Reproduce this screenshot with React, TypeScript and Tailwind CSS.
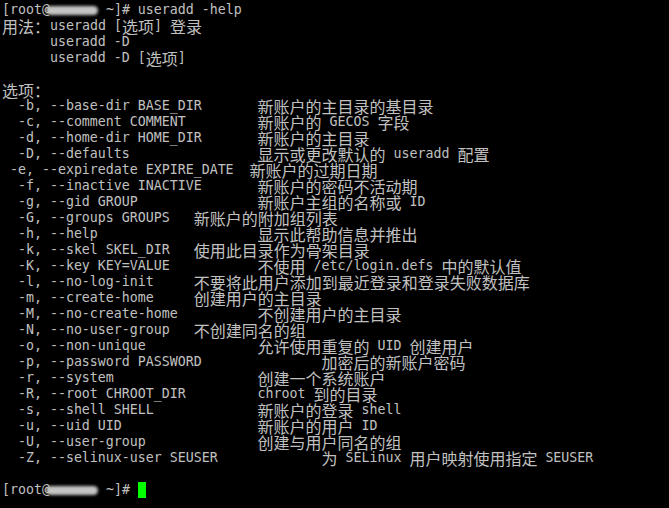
import React from 'react';

const HOST = '\u0000';

const options: [string, number, string][] = [
  ['  -b, --base-dir BASE_DIR', 32, '新账户的主目录的基目录'],
  ['  -c, --comment COMMENT', 32, '新账户的 GECOS 字段'],
  ['  -d, --home-dir HOME_DIR', 32, '新账户的主目录'],
  ['  -D, --defaults', 32, '显示或更改默认的 useradd 配置'],
  [' -e, --expiredate EXPIRE_DATE', 31, '新账户的过期日期'],
  ['  -f, --inactive INACTIVE', 32, '新账户的密码不活动期'],
  ['  -g, --gid GROUP', 32, '新账户主组的名称或 ID'],
  ['  -G, --groups GROUPS', 24, '新账户的附加组列表'],
  ['  -h, --help', 32, '显示此帮助信息并推出'],
  ['  -k, --skel SKEL_DIR', 24, '使用此目录作为骨架目录'],
  ['  -K, --key KEY=VALUE', 32, '不使用 /etc/login.defs 中的默认值'],
  ['  -l, --no-log-init', 24, '不要将此用户添加到最近登录和登录失败数据库'],
  ['  -m, --create-home', 24, '创建用户的主目录'],
  ['  -M, --no-create-home', 32, '不创建用户的主目录'],
  ['  -N, --no-user-group', 24, '不创建同名的组'],
  ['  -o, --non-unique', 32, '允许使用重复的 UID 创建用户'],
  ['  -p, --password PASSWORD', 40, '加密后的新账户密码'],
  ['  -r, --system', 32, '创建一个系统账户'],
  ['  -R, --root CHROOT_DIR', 32, 'chroot 到的目录'],
  ['  -s, --shell SHELL', 32, '新账户的登录 shell'],
  ['  -u, --uid UID', 32, '新账户的用户 ID'],
  ['  -U, --user-group', 32, '创建与用户同名的组'],
  ['  -Z, --selinux-user SEUSER', 40, '为 SELinux 用户映射使用指定 SEUSER'],
];

const lines: string[] = [
  `[root@${HOST} ~]# useradd -help`,
  '用法：useradd [选项] 登录',
  '      useradd -D',
  '      useradd -D [选项]',
  '',
  '选项：',
  ...options.map(([left, col, desc]) => left.padEnd(col) + desc),
  '',
  `[root@${HOST} ~]# `,
];

// hostname is smudged out in the capture
const Smudge = () => (
  <span className="inline-block w-[48px] h-4 align-top">
    <span className="block mt-[4px] ml-[-4px] w-[52px] h-[9px] rounded-full bg-[#c4c4c4] blur-[1.5px]" />
  </span>
);

const isWide = (ch: string) => ch.charCodeAt(0) > 0x7f;

const Line: React.FC<{ text: string; cursor?: boolean }> = ({ text, cursor }) => {
  const parts: React.ReactNode[] = [];
  let buf = '';
  let wide = false;
  const flush = () => {
    if (buf) {
      parts.push(
        wide ? (
          <span
            key={parts.length}
            className="inline-block h-4 align-top text-[16px] leading-4 font-['Noto_Sans_CJK_SC',sans-serif]"
          >
            {buf}
          </span>
        ) : (
          <span key={parts.length}>{buf}</span>
        )
      );
    }
    buf = '';
  };
  for (const ch of text) {
    if (ch === HOST) {
      flush();
      parts.push(<Smudge key={parts.length} />);
      continue;
    }
    if (isWide(ch) !== wide) {
      flush();
      wide = isWide(ch);
    }
    buf += ch;
  }
  flush();

  return (
    <div className="h-4 leading-4 whitespace-pre">
      {parts}
      {cursor && <span className="inline-block w-2 h-4 align-top bg-[#00ff00]" />}
    </div>
  );
};

export default function App() {
  return (
    <div className="w-[669px] h-[508px] bg-black overflow-hidden pt-[2px] pl-[2px] text-[#c0c0c0] text-[13.288px] font-['DejaVu_Sans_Mono',monospace]">
      {lines.map((l, i) => (
        <Line key={i} text={l} cursor={i === lines.length - 1} />
      ))}
    </div>
  );
}
